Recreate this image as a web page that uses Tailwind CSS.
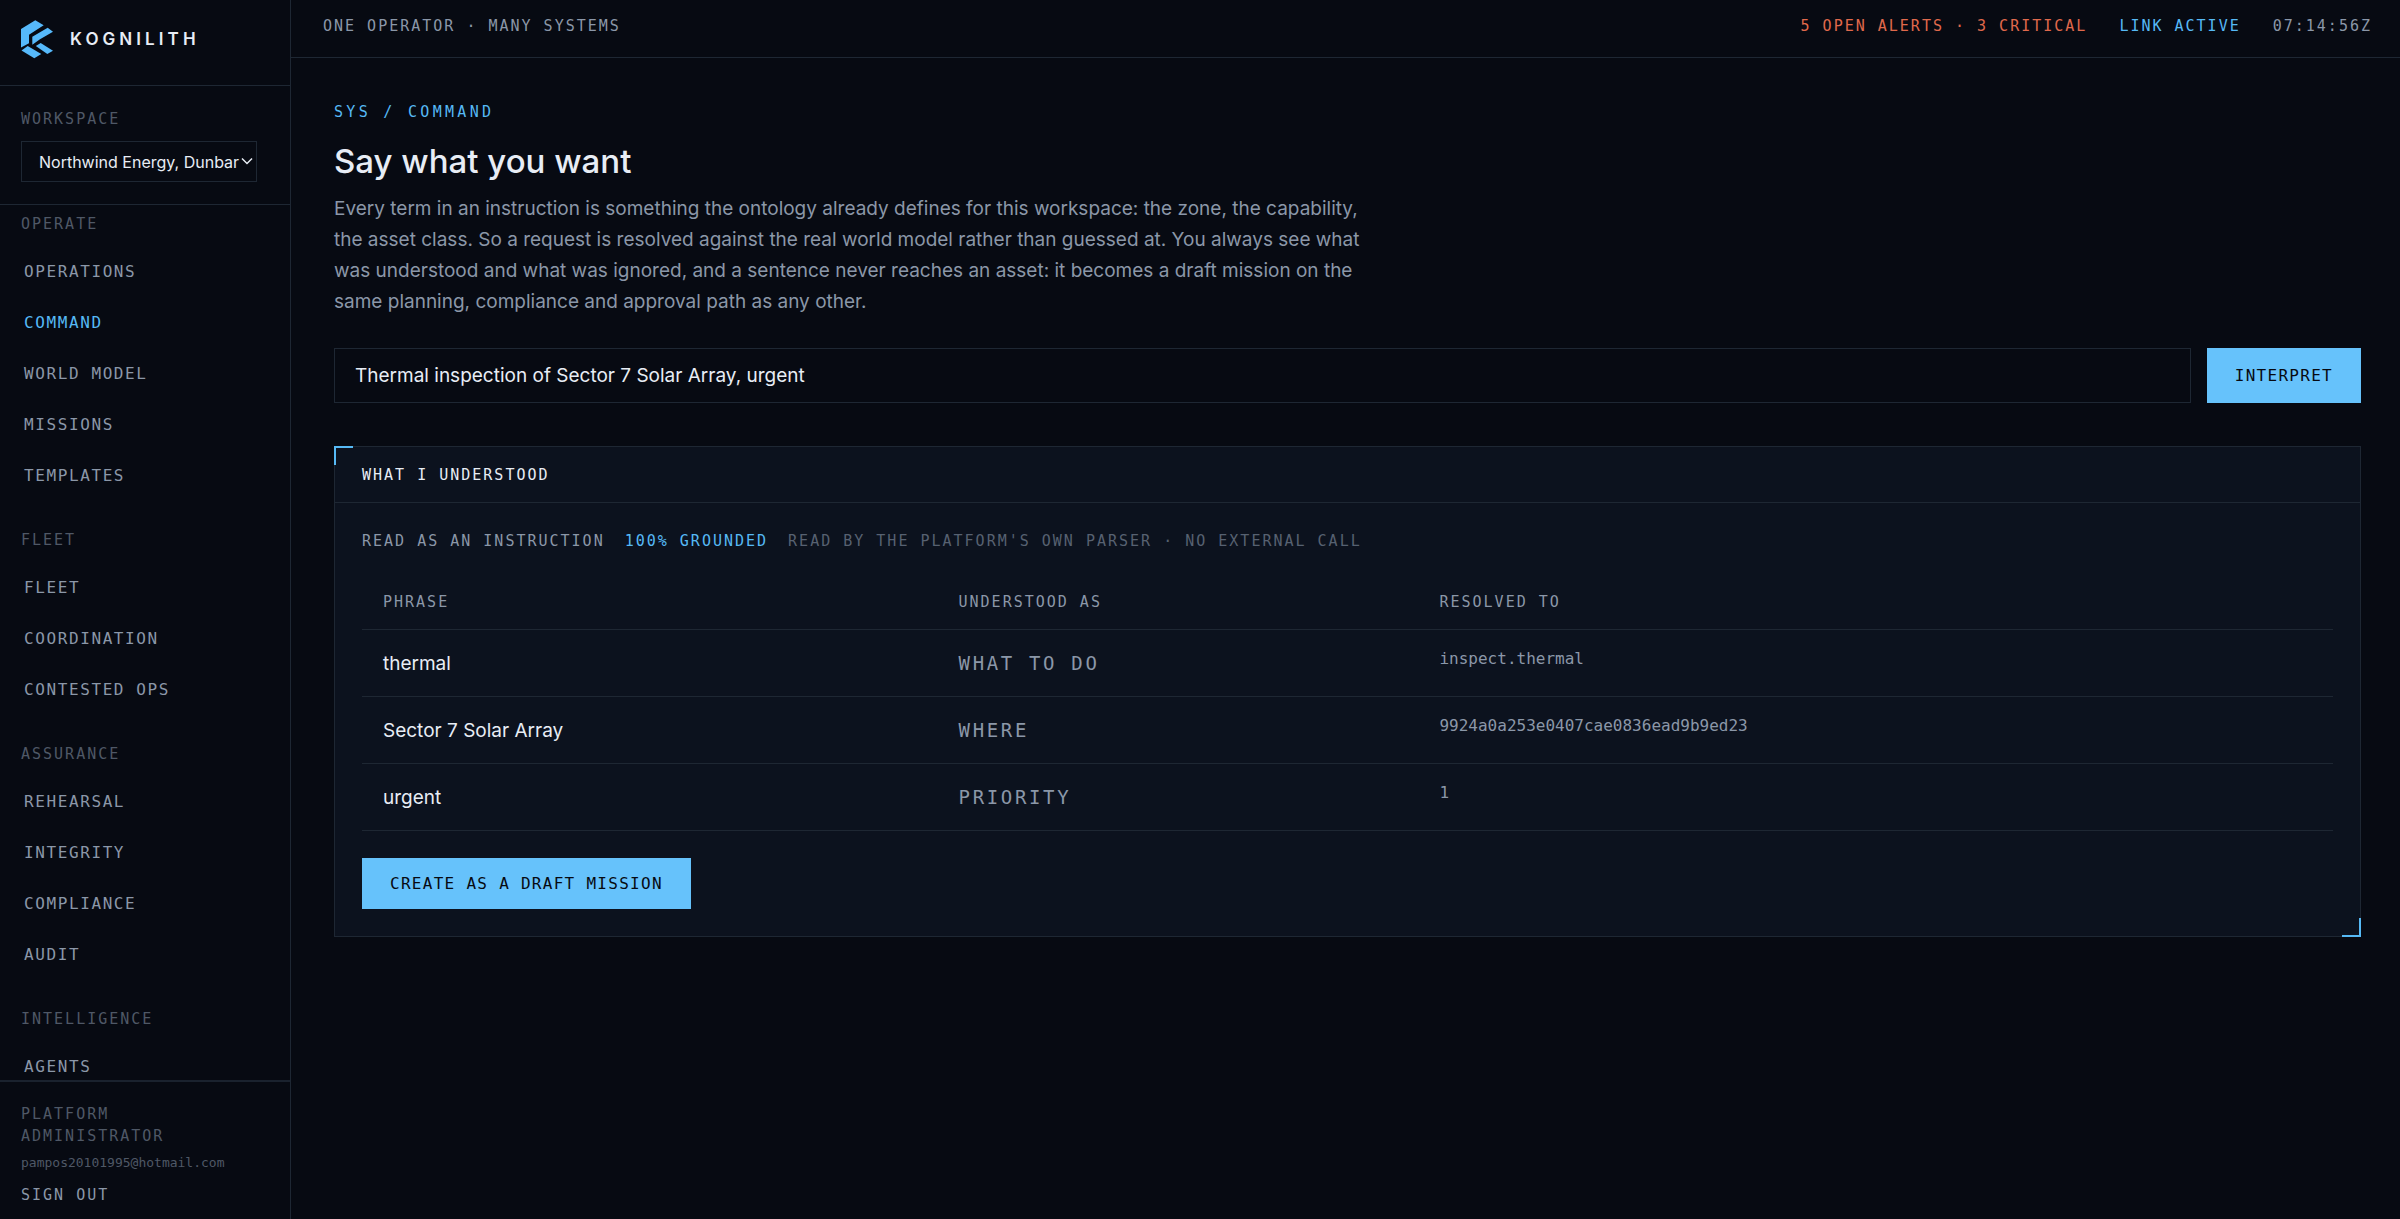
<!DOCTYPE html>
<html lang="en">
<head>
    <meta charset="UTF-8">
    <meta name="viewport" content="width=device-width, initial-scale=1.0">
    <title>Kognilith - Command</title>
    <script src="https://cdn.jsdelivr.net/npm/@tailwindcss/browser@4"></script>
</head>
<body class="bg-[#070a12] text-[#e8edf5] font-['Inter',sans-serif] h-screen flex overflow-hidden">

    <!-- Sidebar -->
    <aside class="w-[291px] shrink-0 flex flex-col border-r border-[#1e2733]">
        <div class="flex items-center gap-4 pl-5 pt-[19px] pb-[26px] border-b border-[#1e2733]">
            <svg class="w-[34px] h-10" viewBox="0 0 34 40" fill="#56b9fa" aria-hidden="true">
                <path d="M1 10 15.300 1.300 23.700 6.300 9 15.700V24.300L1 28.500Z"/>
                <path d="M12.300 17.700 27.700 8.700 33 12.700 20 20.300 12.300 25.800Z"/>
                <path d="M1.500 31.500 7.700 27 21.300 35 14.300 39.300Z"/>
                <path d="M15.800 27 20.700 24 33 31.700 27.300 35Z"/>
            </svg>
            <span class="text-[17px] leading-[22px] font-semibold tracking-[0.24em]">KOGNILITH</span>
        </div>

        <div class="px-[21px] pt-[22px] pb-[22px] border-b border-[#1e2733] font-['DejaVu_Sans_Mono',monospace]">
            <label for="workspace" class="block text-[15px] leading-[22px] tracking-[2px] text-[#4f5866]">WORKSPACE</label>
            <div class="relative w-[236px] mt-[11px]">
                <select id="workspace" class="appearance-none block w-full h-[41px] pl-[17px] border border-[#1e2733] bg-[#070a12] font-['Inter',sans-serif] text-[16px] text-[#e8edf5]">
                    <option>Northwind Energy, Dunbar</option>
                </select>
                <svg class="absolute right-1 top-4 w-3 h-2 pointer-events-none" viewBox="0 0 12 8" fill="none" stroke="#e8edf5" stroke-width="1.500" aria-hidden="true"><path d="M1 1.500 6 6.500 11 1.500"/></svg>
            </div>
        </div>

        <nav class="flex-1 min-h-0 overflow-y-auto [scrollbar-width:none] pt-2 flex flex-col gap-7 font-['DejaVu_Sans_Mono',monospace] text-[16px] tracking-[0.1em] text-[#8b97a8]">
            <section>
                <h2 class="pl-[21px] mb-[11px] text-[15px] leading-[22px] tracking-[2px] text-[#4f5866]">OPERATE</h2>
                <a href="#" class="flex items-center h-[51px] pl-6">OPERATIONS</a>
                <a href="#" class="flex items-center h-[51px] pl-6 text-[#56b9f5]" aria-current="page">COMMAND</a>
                <a href="#" class="flex items-center h-[51px] pl-6">WORLD MODEL</a>
                <a href="#" class="flex items-center h-[51px] pl-6">MISSIONS</a>
                <a href="#" class="flex items-center h-[51px] pl-6">TEMPLATES</a>
            </section>
            <section>
                <h2 class="pl-[21px] mb-[11px] text-[15px] leading-[22px] tracking-[2px] text-[#4f5866]">FLEET</h2>
                <a href="#" class="flex items-center h-[51px] pl-6">FLEET</a>
                <a href="#" class="flex items-center h-[51px] pl-6">COORDINATION</a>
                <a href="#" class="flex items-center h-[51px] pl-6">CONTESTED OPS</a>
            </section>
            <section>
                <h2 class="pl-[21px] mb-[11px] text-[15px] leading-[22px] tracking-[2px] text-[#4f5866]">ASSURANCE</h2>
                <a href="#" class="flex items-center h-[51px] pl-6">REHEARSAL</a>
                <a href="#" class="flex items-center h-[51px] pl-6">INTEGRITY</a>
                <a href="#" class="flex items-center h-[51px] pl-6">COMPLIANCE</a>
                <a href="#" class="flex items-center h-[51px] pl-6">AUDIT</a>
            </section>
            <section>
                <h2 class="pl-[21px] mb-[11px] text-[15px] leading-[22px] tracking-[2px] text-[#4f5866]">INTELLIGENCE</h2>
                <a href="#" class="flex items-center h-[51px] pl-6">AGENTS</a>
            </section>
        </nav>

        <div class="border-t-2 border-[#1a222e] px-[21px] pt-[21px] pb-[13px] font-['DejaVu_Sans_Mono',monospace] text-[#4f5866]">
            <p class="text-[15px] leading-[22px] tracking-[2px]">PLATFORM<br>ADMINISTRATOR</p>
            <p class="mt-[6px] text-[13px] leading-5">pampos20101995@hotmail.com</p>
            <button type="button" class="block mt-[11px] text-[15px] leading-[22px] tracking-[2px] text-[#8b97a8]">SIGN OUT</button>
        </div>
    </aside>

    <div class="flex-1 min-w-0 flex flex-col">
        <!-- Status bar -->
        <header class="flex justify-between pl-8 pr-7 pt-[15px] pb-5 border-b border-[#1e2733] font-['DejaVu_Sans_Mono',monospace] text-[15px] leading-[22px] tracking-[2px] text-[#8b97a8]">
            <span>ONE OPERATOR · MANY SYSTEMS</span>
            <div class="flex gap-8">
                <span class="text-[#e0694c]">5 OPEN ALERTS · 3 CRITICAL</span>
                <span class="text-[#56b9f5]">LINK ACTIVE</span>
                <span>07:14:56Z</span>
            </div>
        </header>

        <main class="flex-1 min-h-0 overflow-y-auto pl-[43px] pr-[39px] pt-[43px]">
            <p class="font-['DejaVu_Sans_Mono',monospace] text-[15px] leading-[22px] tracking-[0.22em] text-[#56b9f5]">SYS / COMMAND</p>
            <h1 class="mt-[18px] text-[33px] leading-10 font-medium">Say what you want</h1>
            <p class="mt-3 max-w-[1026px] text-[19px] leading-[31px] text-[#8b97a8]">Every term in an instruction is something the ontology already defines for this workspace: the zone, the capability, the asset class. So a request is resolved against the real world model rather than guessed at. You always see what was understood and what was ignored, and a sentence never reaches an asset: it becomes a draft mission on the same planning, compliance and approval path as any other.</p>

            <form class="flex gap-4 mt-[31px]">
                <input type="text" aria-label="Instruction" value="Thermal inspection of Sector 7 Solar Array, urgent" class="flex-1 min-w-0 h-[55px] px-5 border border-[#1e2733] bg-[#070a12] text-[19px] text-[#e8edf5]">
                <button type="button" class="h-[55px] px-7 bg-[#66c2fb] text-[#070a12] font-['DejaVu_Sans_Mono',monospace] text-[16px] tracking-[0.08em]">INTERPRET</button>
            </form>

            <!-- Interpretation panel -->
            <section class="relative mt-[43px] border border-[#1e2733] bg-[#0c121e]">
                <span class="absolute -top-px -left-px size-[19px] border-t-2 border-l-2 border-[#56b9f5]"></span>
                <span class="absolute -bottom-px -right-px size-[19px] border-b-2 border-r-2 border-[#56b9f5]"></span>
                <h2 class="px-[27px] pt-[17px] pb-4 border-b border-[#1e2733] font-['DejaVu_Sans_Mono',monospace] text-[15px] leading-[22px] tracking-[2px]">WHAT I UNDERSTOOD</h2>
                <div class="p-[27px]">
                    <p class="flex gap-5 font-['DejaVu_Sans_Mono',monospace] text-[15px] leading-[22px] tracking-[2px]">
                        <span class="text-[#8b97a8]">READ AS AN INSTRUCTION</span>
                        <span class="text-[#56b9f5]">100% GROUNDED</span>
                        <span class="text-[#576171]">READ BY THE PLATFORM'S OWN PARSER · NO EXTERNAL CALL</span>
                    </p>
                    <table class="w-full table-fixed mt-[22px] text-left">
                        <thead>
                            <tr class="border-b border-[#1e2733] font-['DejaVu_Sans_Mono',monospace] text-[15px] leading-[22px] tracking-[2px] text-[#8b97a8]">
                                <th scope="col" class="w-[29.2%] px-[21px] pt-[17px] pb-4 font-medium">PHRASE</th>
                                <th scope="col" class="w-[24.4%] px-[21px] pt-[17px] pb-4 font-medium">UNDERSTOOD AS</th>
                                <th scope="col" class="px-[21px] pt-[17px] pb-4 font-medium">RESOLVED TO</th>
                            </tr>
                        </thead>
                        <tbody class="align-top text-[#8b97a8]">
                            <tr class="border-b border-[#1e2733]">
                                <td class="px-[21px] pt-[18px] pb-[17px] text-[19px] leading-[31px] text-[#e8edf5]">thermal</td>
                                <td class="px-[21px] pt-[18px] pb-[17px] font-['DejaVu_Sans_Mono',monospace] text-[19px] leading-[31px] tracking-[0.14em]">WHAT TO DO</td>
                                <td class="px-[21px] pt-[18px] pb-[17px] font-['DejaVu_Sans_Mono',monospace] text-[16px] leading-[22px]">inspect.thermal</td>
                            </tr>
                            <tr class="border-b border-[#1e2733]">
                                <td class="px-[21px] pt-[18px] pb-[17px] text-[19px] leading-[31px] text-[#e8edf5]">Sector 7 Solar Array</td>
                                <td class="px-[21px] pt-[18px] pb-[17px] font-['DejaVu_Sans_Mono',monospace] text-[19px] leading-[31px] tracking-[0.14em]">WHERE</td>
                                <td class="px-[21px] pt-[18px] pb-[17px] font-['DejaVu_Sans_Mono',monospace] text-[16px] leading-[22px]">9924a0a253e0407cae0836ead9b9ed23</td>
                            </tr>
                            <tr class="border-b border-[#1e2733]">
                                <td class="px-[21px] pt-[18px] pb-[17px] text-[19px] leading-[31px] text-[#e8edf5]">urgent</td>
                                <td class="px-[21px] pt-[18px] pb-[17px] font-['DejaVu_Sans_Mono',monospace] text-[19px] leading-[31px] tracking-[0.14em]">PRIORITY</td>
                                <td class="px-[21px] pt-[18px] pb-[17px] font-['DejaVu_Sans_Mono',monospace] text-[16px] leading-[22px]">1</td>
                            </tr>
                        </tbody>
                    </table>
                    <button type="button" class="block mt-[27px] h-[51px] px-7 bg-[#66c2fb] text-[#070a12] font-['DejaVu_Sans_Mono',monospace] text-[16px] tracking-[0.08em]">CREATE AS A DRAFT MISSION</button>
                </div>
            </section>
        </main>
    </div>

</body>
</html>
